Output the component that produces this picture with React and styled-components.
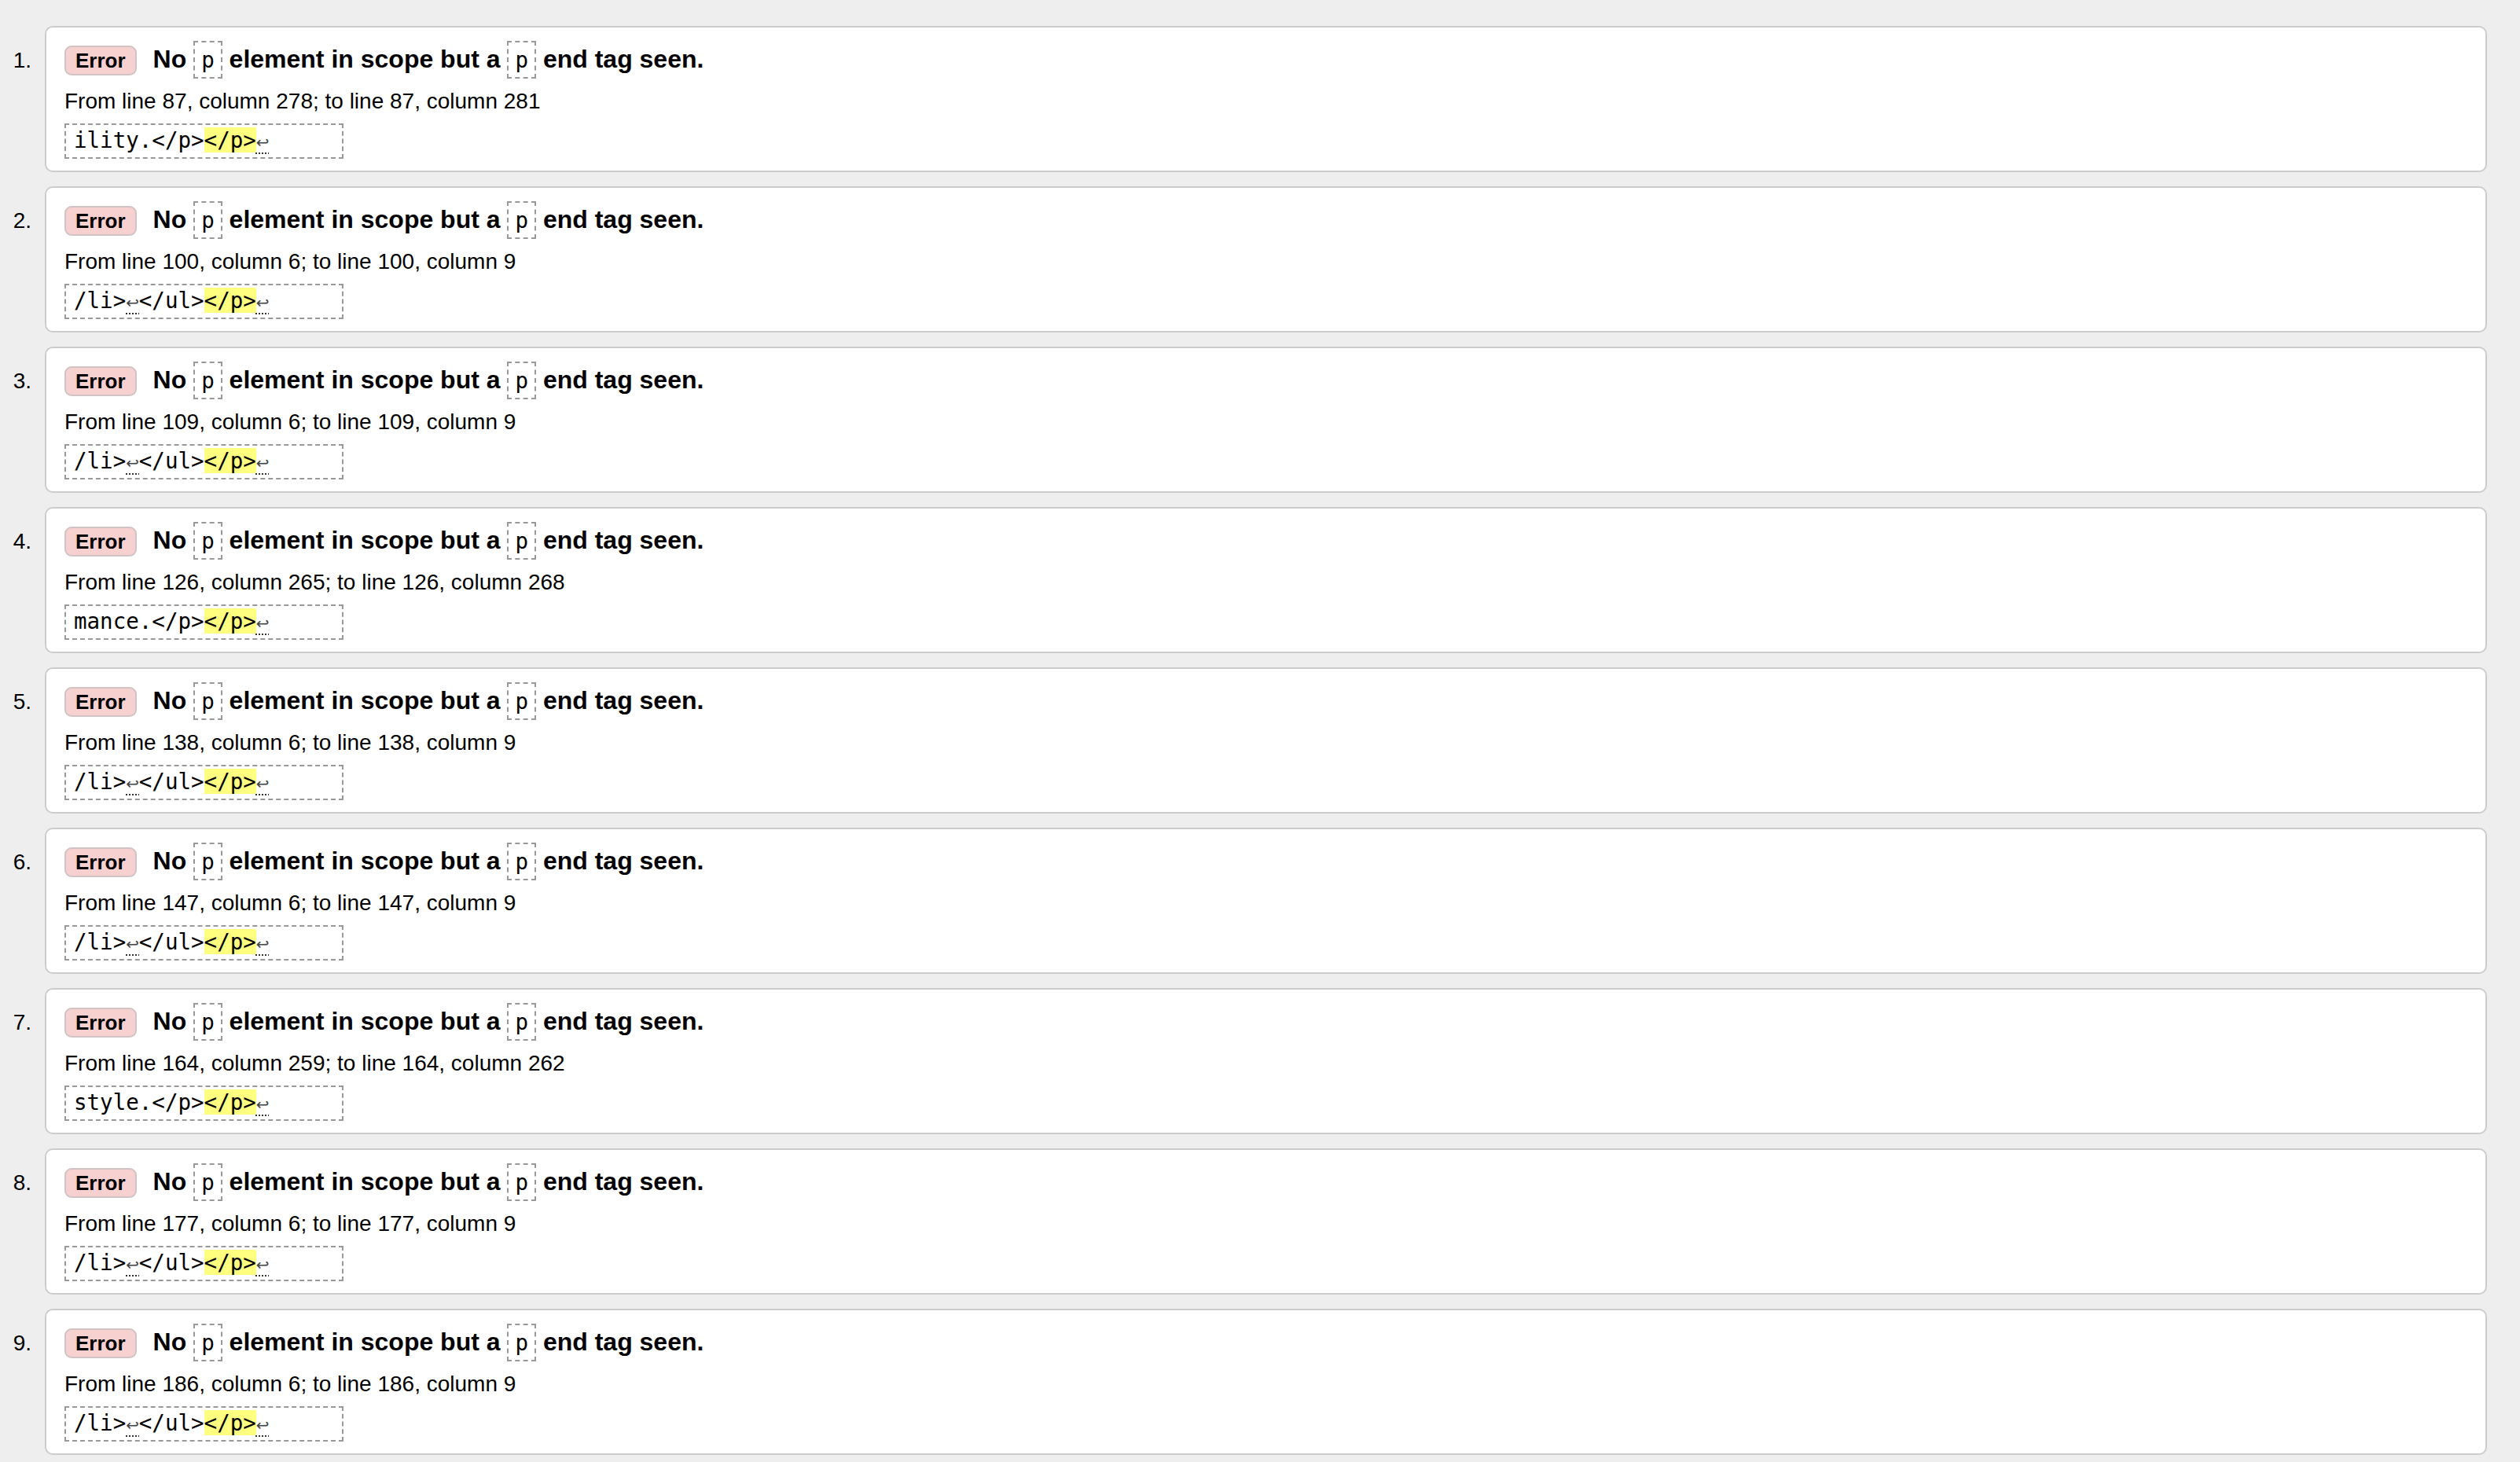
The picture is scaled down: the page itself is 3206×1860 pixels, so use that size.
import React from 'react'
import styled, { createGlobalStyle } from 'styled-components'

const GlobalStyle = createGlobalStyle`
  html, body {
    margin: 0;
    padding: 0;
    background: #eee;
  }
  body {
    font-family: "Liberation Sans", Arial, sans-serif;
    color: #000;
  }
`

// each message: where it was found, and the extract pieces
const messages = [
  { from: [87, 278], to: [87, 281], before: 'ility.</p>' },
  { from: [100, 6], to: [100, 9], before: 'li' },
  { from: [109, 6], to: [109, 9], before: 'li' },
  { from: [126, 265], to: [126, 268], before: 'mance.</p>' },
  { from: [138, 6], to: [138, 9], before: 'li' },
  { from: [147, 6], to: [147, 9], before: 'li' },
  { from: [164, 259], to: [164, 262], before: 'style.</p>' },
  { from: [177, 6], to: [177, 9], before: 'li' },
  { from: [186, 6], to: [186, 9], before: 'li' },
]

const Page = styled.ol`
  list-style: none;
  margin: 0;
  padding: 33px 42px 0 0;
  display: flex;
  flex-direction: column;
  gap: 18px;
`

const Item = styled.li`
  display: flex;
  align-items: baseline;
`

const Number = styled.span`
  flex: 0 0 57px;
  box-sizing: border-box;
  padding-right: 17px;
  text-align: right;
  font-size: 28px;
`

const Card = styled.div`
  flex: 1;
  background: #fff;
  border: 2px solid #ccc;
  border-radius: 10px;
  padding: 16px 23px 15px;
`

const Title = styled.p`
  margin: 0;
  font-size: 32px;
  font-weight: bold;
  line-height: 48px;
`

const Badge = styled.strong`
  display: inline-block;
  background: #f7d0d0;
  border: 2px solid #d2c4c4;
  border-radius: 9px;
  padding: 2px 12px;
  margin-right: 21px;
  font-size: 26px;
  line-height: 30px;
`

const Code = styled.code`
  display: inline-block;
  font-family: "DejaVu Sans Mono", "Liberation Mono", monospace;
  font-weight: normal;
  font-size: 27.5px;
  line-height: 32px;
  padding: 6px 8px;
  border: 2px dashed #999;
`

const Location = styled.p`
  margin: 11px 0 0;
  font-size: 28px;
  line-height: 36px;
`

const Extract = styled.code`
  display: block;
  margin-top: 10px;
  width: 20ch;
  padding: 3px 10px;
  border: 2px dashed #999;
  font-family: "DejaVu Sans Mono", "Liberation Mono", monospace;
  font-size: 27.5px;
  line-height: 32px;
  white-space: pre;
`

const Mark = styled.b`
  font-weight: normal;
  background: #ffff80;
`

const LineFeed = styled.span`
  display: inline-block;
  width: 1ch;
  font-size: 27.5px;
  text-align: left;
  color: #444;
  span {
    font-family: "DejaVu Sans", sans-serif;
    font-size: 20px;
    text-decoration: underline dotted #333;
    text-decoration-thickness: 2px;
    text-underline-offset: 6px;
  }
`

const Lf = () => (
  <LineFeed title="Line feed">
    <span>↩</span>
  </LineFeed>
)

const Snippet = ({ before }) =>
  before === 'li' ? (
    <>
      /li&gt;<Lf />&lt;/ul&gt;
    </>
  ) : (
    before
  )

export default function App() {
  return (
    <>
      <GlobalStyle />
      <Page>
        {messages.map((m, i) => (
          <Item key={i}>
            <Number>{i + 1}.</Number>
            <Card>
              <Title>
                <Badge>Error</Badge>
                No <Code>p</Code> element in scope but a <Code>p</Code> end tag seen.
              </Title>
              <Location>
                From line {m.from[0]}, column {m.from[1]}; to line {m.to[0]}, column {m.to[1]}
              </Location>
              <Extract>
                <Snippet before={m.before} />
                <Mark>&lt;/p&gt;</Mark>
                <Lf />
              </Extract>
            </Card>
          </Item>
        ))}
      </Page>
    </>
  )
}
